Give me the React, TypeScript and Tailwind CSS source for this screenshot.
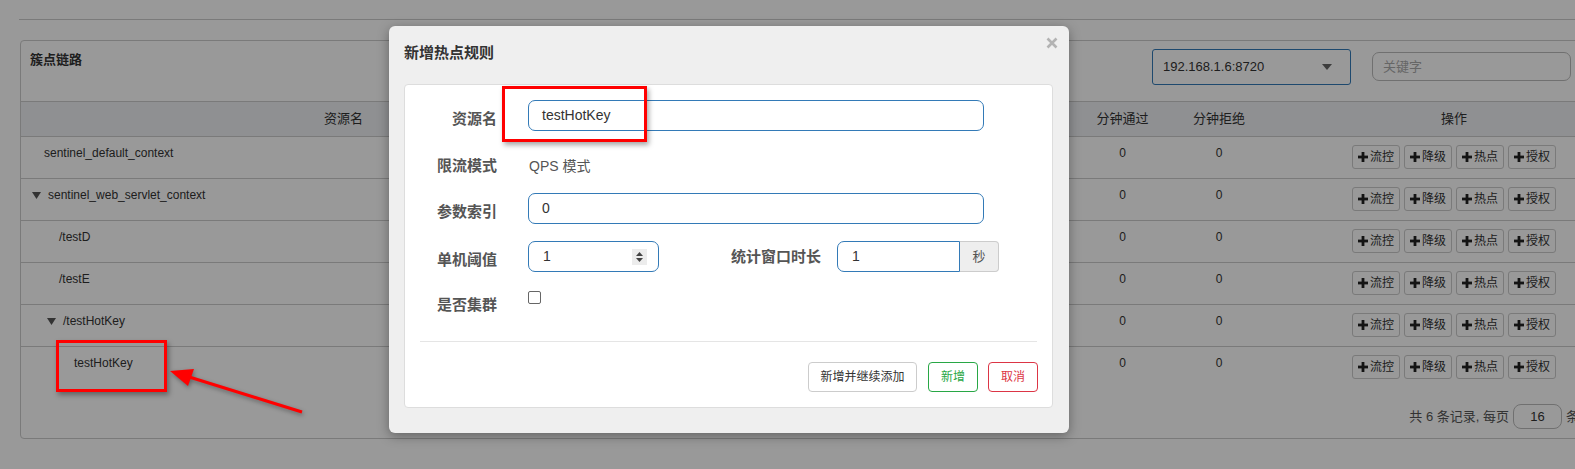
import React from 'react';

const FONT = "font-['Liberation_Sans','Noto_Sans_CJK_SC',sans-serif]";

type Row = { name: string; indent: string; tree?: boolean; last?: boolean };

const rows: Row[] = [
  { name: 'sentinel_default_context', indent: 'pl-[23px]' },
  { name: 'sentinel_web_servlet_context', indent: 'pl-[11px]', tree: true },
  { name: '/testD', indent: 'pl-[38px]' },
  { name: '/testE', indent: 'pl-[38px]' },
  { name: '/testHotKey', indent: 'pl-[26px]', tree: true },
  { name: 'testHotKey', indent: 'pl-[53px]', last: true },
];

const GRID = 'grid grid-cols-[645px_102px_102px_102px_103px_95px_98px_372px]';

const Caret = () => (
  <svg width="9" height="7" viewBox="0 0 9 7" className="mr-[7px] shrink-0">
    <polygon points="0,0 9,0 4.5,7" fill="#555" />
  </svg>
);

const PlusIcon = () => (
  <svg width="10" height="10" viewBox="0 0 10 10" className="mr-[2px]">
    <rect x="3.6" y="0" width="2.8" height="10" fill="#222" />
    <rect x="0" y="3.6" width="10" height="2.8" fill="#222" />
  </svg>
);

const OpButtons = () => (
  <div className="flex justify-center gap-[4px]">
    {['流控', '降级', '热点', '授权'].map(t => (
      <div key={t} className="w-[48px] h-[24px] flex items-center justify-center border border-[#ccc] rounded-[3px] bg-white text-[12px] text-[#333]">
        <PlusIcon />
        {t}
      </div>
    ))}
  </div>
);

const App: React.FC = () => {
  return (
    <div className={`relative w-[1575px] h-[469px] overflow-hidden bg-white text-[#333] ${FONT}`}>
      {/* page behind the modal */}
      <div className="pl-[19px] pt-[19px]">
        <div className="h-px w-[1600px] bg-[#ccc]" />
        <div className="mt-[20px] ml-px w-[1621px] border border-[#ccc] rounded-[4px] bg-white">
          <div className="h-[60px] flex items-start pl-[9px] pr-[69px]">
            <div className="mt-[9px] text-[13px] font-bold leading-[20px]">簇点链路</div>
            <div className="ml-auto mt-[8px] w-[199px] h-[36px] border border-[#337ab7] rounded-[3px] flex items-center pl-[10px] pr-[18px] text-[13px]">
              <span>192.168.1.6:8720</span>
              <svg width="10" height="6" viewBox="0 0 10 6" className="ml-auto">
                <polygon points="0,0 10,0 5,6" fill="#666" />
              </svg>
            </div>
            <div className="ml-[21px] mt-[11px] w-[199px] h-[29px] border border-[#bbb] rounded-[7px] flex items-center pl-[10px] text-[13px] text-[#aaa]">
              关键字
            </div>
          </div>

          <div className={`${GRID} h-[36px] border-y border-[#ccc] bg-[#eef0f4] items-center text-[13px] text-center`}>
            <div>资源名</div>
            <div>通过QPS</div>
            <div>拒绝QPS</div>
            <div>并发数</div>
            <div>平均RT</div>
            <div>分钟通过</div>
            <div>分钟拒绝</div>
            <div>操作</div>
          </div>

          {rows.map(r => (
            <div key={r.name} className={`${GRID} items-start h-[42px] pt-[8px] text-[12px] leading-[16px] ${r.last ? '' : 'border-b border-[#ccc]'}`}>
              <div className={`flex items-center h-[16px] ${r.indent}`}>
                {r.tree && <Caret />}
                <span>{r.name}</span>
              </div>
              <div className="text-center">0</div>
              <div className="text-center">0</div>
              <div className="text-center">0</div>
              <div className="text-center">0</div>
              <div className="text-center">0</div>
              <div className="text-center">0</div>
              <OpButtons />
            </div>
          ))}

          <div className="h-[49px] pt-[15px] flex items-start justify-end pr-[61px] text-[13px] text-[#555]">
            <span className="mt-[3px]">共 6 条记录, 每页</span>
            <div className="ml-[4px] w-[49px] h-[25px] border border-[#bbb] rounded-[8px] flex items-center justify-center text-[#333]">16</div>
            <span className="ml-[4px] mt-[3px]">条</span>
          </div>
        </div>
      </div>

      {/* backdrop */}
      <div className="absolute inset-0 bg-black/40" />

      {/* dialog */}
      <div className="absolute left-[389px] top-[26px] w-[680px] h-[407px] rounded-[6px] bg-[#efefef] shadow-[0_3px_12px_rgba(0,0,0,0.35)]">
        <div className="h-[58px] pl-[15px] pt-[17px] text-[15px] font-bold leading-[20px] text-[#333]">新增热点规则</div>
        <svg width="12" height="12" viewBox="0 0 12 12" className="absolute left-[657px] top-[11px]">
          <path d="M1.5 1.5 L10.5 10.5 M10.5 1.5 L1.5 10.5" stroke="#b3b3b3" strokeWidth="2.6" />
        </svg>

        <div className="ml-[15px] w-[649px] h-[324px] bg-white border border-[#ddd] rounded-[4px] pt-[15px] text-[#555]">
          <div className="flex items-start h-[31px]">
            <div className="w-[92px] pt-[9px] text-right text-[15px] font-bold leading-[20px]">资源名</div>
            <div className="ml-[31px] w-[456px] h-[31px] border border-[#337ab7] rounded-[7px] flex items-center pl-[13px] text-[14px] text-[#333]">testHotKey</div>
          </div>

          <div className="mt-[16px] flex items-start h-[31px]">
            <div className="w-[92px] pt-[9px] text-right text-[15px] font-bold leading-[20px]">限流模式</div>
            <div className="ml-[32px] pt-[9px] text-[14px] leading-[20px]">QPS 模式</div>
          </div>

          <div className="mt-[15px] flex items-start h-[31px]">
            <div className="w-[92px] pt-[9px] text-right text-[15px] font-bold leading-[20px]">参数索引</div>
            <div className="ml-[31px] w-[456px] h-[31px] border border-[#337ab7] rounded-[7px] flex items-center pl-[13px] text-[14px] text-[#333]">0</div>
          </div>

          <div className="mt-[17px] flex items-start h-[31px]">
            <div className="w-[92px] pt-[9px] text-right text-[15px] font-bold leading-[20px]">单机阈值</div>
            <div className="ml-[31px] w-[131px] h-[31px] border border-[#337ab7] rounded-[7px] flex items-center pl-[14px] pr-[11px] text-[14px] text-[#333]">
              <span>1</span>
              <div className="ml-auto w-[15px] h-[16px] bg-[#ececec] flex flex-col items-center justify-center gap-[2px]">
                <svg width="7" height="4" viewBox="0 0 7 4"><polygon points="0,4 7,4 3.5,0" fill="#444" /></svg>
                <svg width="7" height="4" viewBox="0 0 7 4"><polygon points="0,0 7,0 3.5,4" fill="#444" /></svg>
              </div>
            </div>
            <div className="ml-[71px] w-[91px] pt-[6px] text-right text-[15px] font-bold leading-[20px] whitespace-nowrap">统计窗口时长</div>
            <div className="ml-[16px] flex h-[31px]">
              <div className="w-[123px] border border-[#337ab7] rounded-l-[7px] flex items-center pl-[14px] text-[14px] text-[#333]">1</div>
              <div className="w-[39px] border border-l-0 border-[#ccc] rounded-r-[4px] bg-[#eee] flex items-center justify-center text-[13px]">秒</div>
            </div>
          </div>

          <div className="mt-[14px] flex items-start h-[31px]">
            <div className="w-[92px] pt-[9px] text-right text-[15px] font-bold leading-[20px]">是否集群</div>
            <div className="ml-[31px] mt-[5px] w-[13px] h-[13px] border border-[#666] rounded-[2px] bg-white" />
          </div>

          <div className="mt-[24px] mx-[15px] h-px bg-[#e5e5e5]" />

          <div className="mt-[20px] flex justify-end pr-[14px] text-[12px]">
            <div className="w-[109px] h-[30px] border border-[#ccc] rounded-[4px] flex items-center justify-center text-[#333]">新增并继续添加</div>
            <div className="ml-[11px] w-[50px] h-[30px] border border-[#28a745] rounded-[4px] flex items-center justify-center text-[#28a745]">新增</div>
            <div className="ml-[10px] w-[50px] h-[30px] border border-[#dc3545] rounded-[4px] flex items-center justify-center text-[#dc3545]">取消</div>
          </div>
        </div>
      </div>

      {/* annotations */}
      <div className="absolute left-[502px] top-[86px] w-[145px] h-[56px] border-[3px] border-[#ff0000] shadow-[2px_3px_5px_rgba(0,0,0,0.35)]" />
      <div className="absolute left-[56px] top-[340px] w-[111px] h-[52px] border-[3px] border-[#ff0000] shadow-[2px_3px_5px_rgba(0,0,0,0.35)]" />
      <svg width="1575" height="469" className="absolute left-0 top-0 pointer-events-none drop-shadow-[1px_2px_2px_rgba(0,0,0,0.35)]">
        <line x1="302" y1="412" x2="186" y2="376" stroke="#ff0000" strokeWidth="3" />
        <polygon points="170,371 194,369 188,386" fill="#ff0000" />
      </svg>
    </div>
  );
};

export default App;
